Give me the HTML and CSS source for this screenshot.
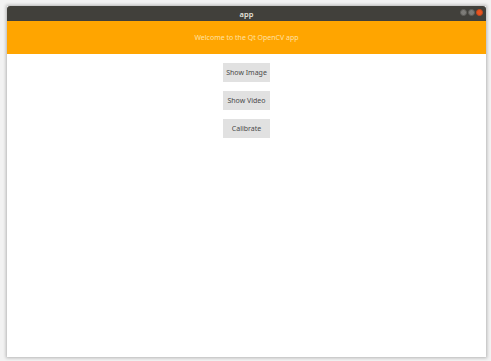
FILE: index.html
```html
<!DOCTYPE html>
<html lang="en">
<head>
  <meta charset="UTF-8" />
  <title>app</title>
  <link rel="stylesheet" href="styles.css">
</head>
<body>

  <div class="window">
    <div class="titlebar">
      <span class="title">app</span>
      <div class="controls">
        <span class="dot"></span>
        <span class="dot"></span>
        <span class="dot close"></span>
      </div>
    </div>

    <div class="banner">Welcome to the Qt OpenCV app</div>

    <div class="content">
      <button class="btn">Show Image</button>
      <button class="btn">Show Video</button>
      <button class="btn">Calibrate</button>
    </div>
  </div>

</body>
</html>
```
FILE: styles.css
```css
body {
  margin: 0;
  padding: 6px 5px 0 7px;
  background: #f2f2f2;
  font-family: 'Noto Sans', 'DejaVu Sans', sans-serif;
  height: 361px;
  box-sizing: border-box;
  overflow: hidden;
}

.window {
  width: 479px;
  height: 351px;
  background: #ffffff;
  box-shadow: 0 0 3px 1px rgba(0, 0, 0, 0.25);
  display: flex;
  flex-direction: column;
}

.titlebar {
  height: 15px;
  background: #41403b;
  border-radius: 3px 3px 0 0;
  position: relative;
  display: flex;
  align-items: center;
  justify-content: center;
}

.title {
  color: #e6e3dc;
  font-size: 7.5px;
  font-weight: 600;
}

.controls {
  position: absolute;
  right: 3px;
  top: 3px;
  display: flex;
  gap: 1px;
}

.dot {
  width: 7px;
  height: 7px;
  border-radius: 50%;
  background: #7d7c78;
  box-sizing: border-box;
  border: 1px solid #5e5d59;
}

.dot.close {
  background: #e95420;
  border-color: #c4461a;
}

.banner {
  height: 33px;
  background: #ffa500;
  color: #ffe2a6;
  font-size: 7px;
  display: flex;
  align-items: center;
  justify-content: center;
}

.content {
  flex: 1;
  display: flex;
  flex-direction: column;
  align-items: center;
  gap: 9px;
  padding-top: 9px;
}

.btn {
  width: 47px;
  height: 19px;
  border: none;
  background: #e1e1e1;
  color: #4a4a4a;
  font-family: 'Noto Sans', 'DejaVu Sans', sans-serif;
  font-size: 7px;
  padding: 0;
}
```
